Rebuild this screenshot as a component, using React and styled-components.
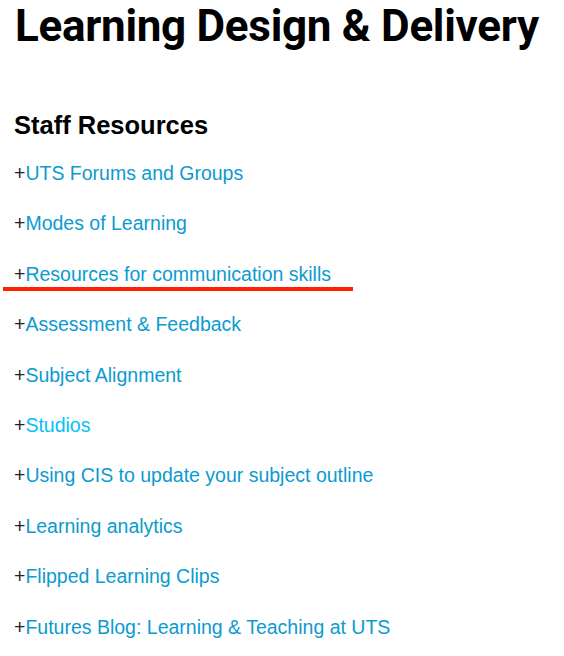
import styled, { createGlobalStyle } from 'styled-components';

const GlobalStyle = createGlobalStyle`
  html, body {
    margin: 0;
    padding: 0;
    background: #fff;
  }
`;

const links = [
  { label: 'UTS Forums and Groups' },
  { label: 'Modes of Learning' },
  { label: 'Resources for communication skills', marked: true },
  { label: 'Assessment & Feedback' },
  { label: 'Subject Alignment' },
  { label: 'Studios', active: true },
  { label: 'Using CIS to update your subject outline' },
  { label: 'Learning analytics' },
  { label: 'Flipped Learning Clips' },
  { label: 'Futures Blog: Learning & Teaching at UTS' },
];

function App() {
  return (
    <Page>
      <GlobalStyle />
      <Title>Learning Design &amp; Delivery</Title>
      <Section>
        <Heading>Staff Resources</Heading>
        <List>
          {links.map((l) => (
            <Item key={l.label} $marked={l.marked}>
              <Plus>+</Plus>
              <Link href="#" $active={l.active}>{l.label}</Link>
            </Item>
          ))}
        </List>
      </Section>
    </Page>
  );
}

const Page = styled.main`
  padding: 2px 0 0 15px;
  font-family: "Liberation Sans", Arial, sans-serif;
`;

const Title = styled.h1`
  margin: 0;
  font-family: Roboto, "DejaVu Sans", sans-serif;
  font-weight: bold;
  font-size: 44px;
  line-height: 48px;
  letter-spacing: -0.3px;
  color: #000;
  white-space: nowrap;
`;

const Section = styled.section`
  margin-top: 60px;
`;

const Heading = styled.h2`
  margin: 0 0 0 -1px;
  font-size: 25.5px;
  line-height: 30px;
  font-weight: bold;
  color: #000;
`;

const List = styled.ul`
  list-style: none;
  margin: 22px 0 0 -1px;
  padding: 0;
  display: flex;
  flex-direction: column;
  gap: 27.4px;
`;

const Item = styled.li`
  position: relative;
  font-size: 19.5px;
  line-height: 23px;

  ${(p) => p.$marked && `
    &::after {
      content: "";
      position: absolute;
      left: -11px;
      top: 24px;
      width: 350px;
      height: 4px;
      background: #ff2200;
    }
  `}
`;

const Plus = styled.span`
  color: #222;
`;

const Link = styled.a`
  color: ${(p) => (p.$active ? '#00c3f4' : '#0b9bd0')};
  text-decoration: none;
`;

export default App;
